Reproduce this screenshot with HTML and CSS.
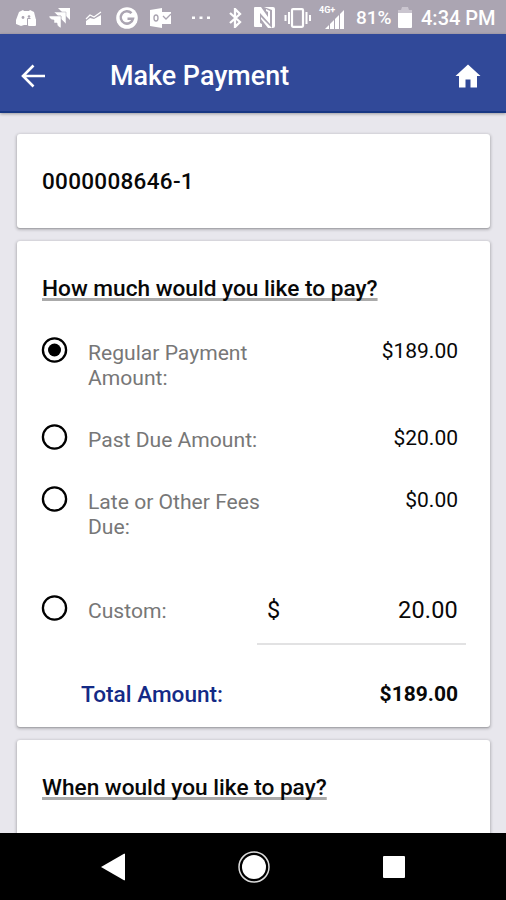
FILE: index.html
```html
<!DOCTYPE html>
<html lang="en">
<head>
<meta charset="utf-8">
<title>Make Payment</title>
<link rel="stylesheet" href="styles.css">
</head>
<body>
<div class="status">
  <svg class="discord" width="21" height="20" viewBox="0 0 21 20"><path fill="#fff" d="M3 4 7 2l1 1h5l1-1 4 2 2 8H12v5H8l-3 1-5-2V12Z"/><circle cx="7" cy="9.500" r="1.400" fill="#aba5b2"/><circle cx="13" cy="8.500" r="1.300" fill="#aba5b2"/><rect x="12" y="11" width="8" height="7" rx="1" fill="#fff"/><path d="M11.500 18v-7.500h3" fill="none" stroke="#aba5b2"/></svg>
  <svg class="jira" width="22" height="22" viewBox="0 0 22 22"><path fill="#fff" d="M9 1h12v12l-4-4V5h-4Z"/><path fill="#fff" stroke="#aba5b2" stroke-width=".5" d="M5 5h12v12l-5-5V9H9Z"/><path fill="#fff" stroke="#aba5b2" stroke-width=".5" d="M0 9h12v12c-3-1-4-3-4-5H5v-3c-3 0-5-2-5-4Z"/></svg>
  <svg class="chart" width="18" height="14" viewBox="0 0 18 14"><path fill="#fff" d="m1 10 4-3 4 1 7-4v10H1Z"/><path d="m1 8 4-4 4 2 7-5" fill="none" stroke="#fff" stroke-width="1.200"/></svg>
  <svg class="google" width="22" height="22" viewBox="0 0 22 22"><circle cx="11" cy="11" r="10.800" fill="#fff"/><path d="M15.500 6.200A6.200 6.200 0 1 0 17 11.700H11.500" fill="none" stroke="#aba5b2" stroke-width="2.500"/></svg>
  <svg class="outlook" width="22" height="20" viewBox="0 0 22 20"><path fill="#fff" d="M0 2 12 0v20L0 18Z"/><ellipse cx="6" cy="10" rx="2" ry="3" fill="none" stroke="#aba5b2" stroke-width="1.400"/><path fill="#fff" d="M12 4h9v12h-9Z"/><path d="m13 8 3 3 5-5" fill="none" stroke="#aba5b2" stroke-width="1.300"/></svg>
  <svg class="dots" width="20" height="4" viewBox="0 0 20 4"><path fill="#fff" d="M1 .5h3v2.500H1Zm7.500 0h3V3h-3ZM16 .5h3V3h-3Z"/></svg>
  <svg class="bluetooth" width="14" height="20" viewBox="0 0 14 20"><path d="m2 5 10 9-5 5V1l5 5-10 9" fill="none" stroke="#fff" stroke-width="2.300"/></svg>
  <svg class="nfc" width="23" height="23" viewBox="0 0 23 23"><path fill="#fff" d="M2 1h6l7 10V6l-2-1V3l4 2v13L7 7v10l2 1v3H2q-1 0-1-1V2q0-1 1-1Zm9 0h9q2 0 2 2v17q0 2-2 2h-5l-7-9v-2l11 11V4Z"/></svg>
  <svg class="vibrate" width="28" height="20" viewBox="0 0 28 20"><rect x="8" y="1.200" width="11" height="17.600" rx="1" fill="none" stroke="#fff" stroke-width="2.200"/><path d="M5 4v12M1.500 7v6M22.500 4v12M26 7v6" stroke="#fff" stroke-width="2"/></svg>
  <div class="network"><svg width="20" height="20" viewBox="0 0 20 20"><path fill="#fff" d="M0 20 4 16v4Zm5-5 4-4v9H5Zm5-5 4-4v14h-4Zm5-5 4-4v19h-4Z"/></svg><span class="generation">4G+</span></div>
  <span class="percent">81%</span>
  <svg class="battery" width="14" height="21" viewBox="0 0 14 21"><path fill="#cac5cf" d="M4 0h6l1 3h3v4H0V3h3Z"/><path fill="#fff" d="M0 6h14v14q0 1-1 1H1q-1 0-1-1Z"/></svg>
  <span class="time">4:34 PM</span>
</div>
<header class="header">
  <svg class="back" width="24" height="24" viewBox="0 0 24 24"><path d="M12.500 1.500 2 12l10.500 10.500M2.500 12H24" fill="none" stroke="#fff" stroke-width="2.600"/></svg>
  <h1 class="title">Make Payment</h1>
  <svg class="home" width="26" height="24" viewBox="0 0 26 24"><path fill="#fff" d="M13 .5 25.500 12H22v11.500h-6.500v-8h-5v8H4V12H.5Z"/></svg>
</header>
<main class="content">
  <section class="card account">0000008646-1</section>
  <section class="card payment">
    <h2 class="question"><span class="underlined">How much would you like to pay?</span></h2>
    <div class="option first">
      <svg class="radio" width="27" height="27" viewBox="0 0 27 27"><circle cx="13.500" cy="14" r="11.600" fill="none" stroke="#000" stroke-width="2.300"/><circle cx="13.500" cy="14" r="6.500"/></svg>
      <span class="label">Regular Payment<br>Amount:</span><span class="amount">$189.00</span>
    </div>
    <div class="option second">
      <svg class="radio" width="27" height="27" viewBox="0 0 27 27"><circle cx="13.500" cy="14" r="11.600" fill="none" stroke="#000" stroke-width="2.300"/></svg>
      <span class="label">Past Due Amount:</span><span class="amount">$20.00</span>
    </div>
    <div class="option third">
      <svg class="radio" width="27" height="27" viewBox="0 0 27 27"><circle cx="13.500" cy="14" r="11.600" fill="none" stroke="#000" stroke-width="2.300"/></svg>
      <span class="label">Late or Other Fees<br>Due:</span><span class="amount">$0.00</span>
    </div>
    <div class="option custom">
      <svg class="radio" width="27" height="27" viewBox="0 0 27 27"><circle cx="13.500" cy="14" r="11.600" fill="none" stroke="#000" stroke-width="2.300"/></svg>
      <span class="label">Custom:</span>
      <div class="entry"><span>$</span><span class="value">20.00</span></div>
    </div>
    <div class="total"><span class="total-label">Total Amount:</span><span class="total-value">$189.00</span></div>
  </section>
  <section class="card schedule">
    <h2 class="question"><span class="underlined">When would you like to pay?</span></h2>
  </section>
</main>
<nav class="navigation">
  <svg width="26" height="28" viewBox="0 0 26 28"><path fill="#fff" d="M1 14 24 .8h1v26.400h-1Z"/></svg>
  <svg class="circle" width="32" height="32" viewBox="0 0 32 32"><circle cx="16" cy="16" r="15" fill="none" stroke="#ddd" stroke-width="1.500"/><circle cx="16" cy="16" r="12" fill="#fff"/></svg>
  <svg width="22" height="22" viewBox="0 0 22 22"><rect width="22" height="22" rx="1" fill="#fff"/></svg>
</nav>
</body>
</html>
```
FILE: styles.css
```css
* { box-sizing: border-box; }
body {
  margin: 0;
  width: 506px;
  height: 900px;
  overflow: hidden;
  display: flex;
  flex-direction: column;
  background: #e8e7ed;
  color: #080808;
  font-family: Roboto, "Liberation Sans", sans-serif;
}
svg { display: block; flex: none; }
h1, h2 { margin: 0; font-weight: 500; }
.status {
  height: 34px;
  flex: none;
  display: flex;
  align-items: center;
  padding: 1px 0 0 16px;
  background: #aba5b2;
  color: #fff;
  white-space: nowrap;
}
.jira { margin-left: 12px; }
.chart { margin-left: 14px; }
.google { margin-left: 13px; }
.outlook { margin-left: 12px; }
.dots { margin-left: 19px; }
.bluetooth { margin-left: 17px; }
.nfc { margin-left: 11px; }
.vibrate { margin-left: 8px; }
.network { position: relative; width: 26px; height: 22px; margin-left: 7px; padding: 2px 0 0 6px; }
.generation { position: absolute; left: 0; top: -1px; font-size: 9px; line-height: 9px; font-weight: 700; }
.percent { width: 36px; margin-left: 11px; font-size: 19px; font-weight: 500; }
.battery { margin-left: 6px; }
.time { margin-left: 9px; font-size: 20px; font-weight: 500; }
.header {
  height: 79px;
  flex: none;
  display: flex;
  align-items: center;
  padding: 6px 25px 0 21px;
  background: #314999;
  border-bottom: 2px solid #173783;
  box-shadow: 0 1px 3px #0005;
  z-index: 1;
}
.title { margin-left: 65px; color: #fff; font-size: 26.900px; line-height: 32px; }
.home { margin-left: auto; }
.content {
  flex: 1;
  min-height: 0;
  overflow: hidden;
  display: flex;
  flex-direction: column;
  gap: 13px;
  padding: 21px 16px 0 17px;
}
.card {
  flex: none;
  background: #fff;
  border-radius: 3px;
  box-shadow: 0 1px 3px 1px #0003, 0 1px 1px #0002;
}
.account { height: 94px; padding: 33px 25px 0; font-size: 22.500px; letter-spacing: .3px; line-height: 28px; font-weight: 500; }
.payment { height: 486px; padding: 33px 32px 0 25px; }
.schedule { height: 130px; padding: 33px 25px 0; }
.question { font-size: 22.650px; line-height: 30px; }
.underlined { text-decoration: underline #aaa 3px; text-underline-offset: 2px; text-decoration-skip-ink: none; }
.option { display: flex; align-items: flex-start; font-size: 21.100px; line-height: 25px; }
.radio { margin-left: -1px; }
.label { margin: 4px 0 0 20px; color: #777; white-space: nowrap; }
.amount { margin: 3px 0 0 auto; font-size: 21px; }
.first { height: 87px; margin-top: 32px; }
.second { height: 62px; }
.third { height: 109px; }
.custom { height: 84px; }
.entry {
  width: 209px;
  height: 51px;
  margin: 0 -8px 0 auto;
  padding: 2px 8px 0 10px;
  display: flex;
  justify-content: space-between;
  border-bottom: 2px solid #e2e2e3;
  font-size: 23.500px;
  line-height: 28px;
}
.value { letter-spacing: .2px; }
.total { display: flex; justify-content: space-between; padding: 2px 0 0 39px; font-size: 22.600px; line-height: 30px; font-weight: 500; }
.total-label { color: #142a86; }
.total-value { font-weight: 700; font-size: 21px; line-height: 28px; }
.navigation {
  height: 67px;
  flex: none;
  display: flex;
  align-items: center;
  justify-content: space-between;
  padding: 0 101px 0 100px;
  background: #000;
}
.circle { margin-right: 2px; }
```
